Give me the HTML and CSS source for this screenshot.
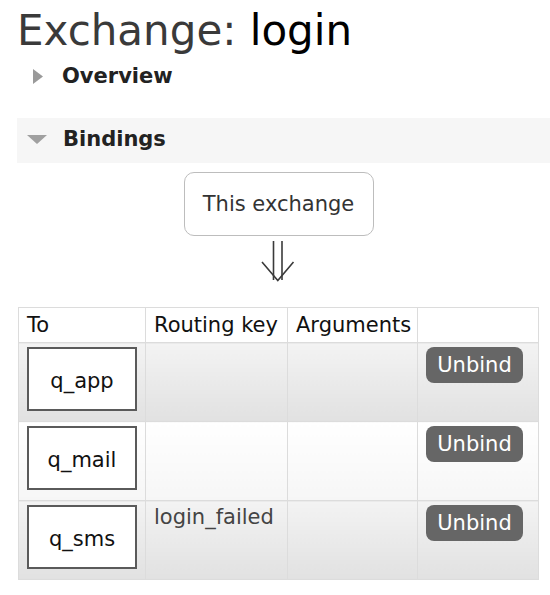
FILE: index.html
```html
<!DOCTYPE html>
<html>
<head>
<meta charset="utf-8">
<link rel="stylesheet" href="styles.css">
</head>
<body>
<h1 class="title"><span class="title-dim">Exchange:</span> login</h1>

<div class="section">
  <div class="sec-head">
    <svg class="tri-right" width="10" height="15" viewBox="0 0 10 15"><polygon points="0,0 10,7.5 0,15" fill="#9a9a9a"/></svg>
    <span class="sec-label">Overview</span>
  </div>
</div>

<div class="section open">
  <div class="sec-head bar">
    <svg class="tri-down" width="20" height="9" viewBox="0 0 20 9"><polygon points="0,0 20,0 10,9" fill="#a0a0a0"/></svg>
    <span class="sec-label">Bindings</span>
  </div>
  <div class="bindings">
    <div class="diagram">
      <div class="this-ex">This exchange</div>
      <svg class="arrow" width="34" height="41" viewBox="0 0 34 41">
        <line x1="12.5" y1="0" x2="12.5" y2="39" stroke="#3a3a3a" stroke-width="1.6"/>
        <line x1="21" y1="0" x2="21" y2="39" stroke="#3a3a3a" stroke-width="1.6"/>
        <polyline points="1,21 16.8,39.5 32.5,21" fill="none" stroke="#3a3a3a" stroke-width="1.6"/>
      </svg>
    </div>
    <table class="bind-table">
      <colgroup>
        <col class="c-to"><col class="c-key"><col class="c-args"><col class="c-act">
      </colgroup>
      <thead>
        <tr><th>To</th><th>Routing key</th><th>Arguments</th><th></th></tr>
      </thead>
      <tbody>
        <tr class="alt1">
          <td><div class="queue">q_app</div></td>
          <td></td>
          <td></td>
          <td><button class="unbind">Unbind</button></td>
        </tr>
        <tr class="alt0">
          <td><div class="queue">q_mail</div></td>
          <td></td>
          <td></td>
          <td><button class="unbind">Unbind</button></td>
        </tr>
        <tr class="alt1">
          <td><div class="queue">q_sms</div></td>
          <td class="key">login_failed</td>
          <td></td>
          <td><button class="unbind">Unbind</button></td>
        </tr>
      </tbody>
    </table>
  </div>
</div>
</body>
</html>
```

FILE: styles.css
```css
html, body {
  margin: 0;
  background: #fff;
}
body {
  padding: 0 0 0 18px;
  font-family: "DejaVu Sans", Verdana, sans-serif;
  font-size: 21px;
  line-height: 25px;
  color: #222;
  overflow: hidden;
}

.title {
  margin: 7px 0 0 -1px;
  font-family: "DejaVu Sans", Verdana, sans-serif;
  font-weight: normal;
  font-size: 42px;
  line-height: 48px;
  color: #000;
  white-space: nowrap;
}
.title-dim {
  color: #3a3a3a;
}

.sec-head {
  display: flex;
  align-items: center;
  height: 25px;
}
.section {
  margin-top: 9px;
}
.section.open {
  margin-top: 29px;
}
.tri-right {
  margin-left: 15px;
  margin-right: 19px;
}
.sec-label {
  font-weight: bold;
  color: #222;
}
.sec-head.bar {
  margin-left: -1px;
  padding: 9px 0 11px 0;
  background: #f6f6f6;
}
.tri-down {
  margin-left: 10px;
  margin-right: 16px;
}

.bindings {
  width: 521px;
}
.diagram {
  display: flex;
  flex-direction: column;
  align-items: center;
  padding-top: 9px;
}
.this-ex {
  box-sizing: border-box;
  width: 190px;
  height: 64px;
  border: 1px solid #bdbdbd;
  border-radius: 10px;
  display: flex;
  align-items: center;
  justify-content: center;
  color: #333;
}
.arrow {
  display: block;
  margin-top: 5px;
  margin-left: -2px;
}

.bind-table {
  margin-top: 25px;
  width: 521px;
  border-collapse: collapse;
  table-layout: fixed;
  border: 1px solid #dcdcdc;
}
.c-to { width: 127px; }
.c-key { width: 142px; }
.c-args { width: 130px; }
.c-act { width: 121px; }

.bind-table th {
  text-align: left;
  font-weight: normal;
  color: #111;
  padding: 5px 8px 4px 8px;
  border: 1px solid #dcdcdc;
  background: #fff;
  white-space: nowrap;
}
.bind-table td {
  vertical-align: top;
  padding: 4px 8px 10px 8px;
  border: 1px solid #dcdcdc;
}
.alt1 td {
  background: linear-gradient(#f3f3f3, #e1e1e1);
}
.alt0 td {
  background: linear-gradient(#ffffff, #f6f6f6);
}
.key {
  color: #444;
}
.queue {
  box-sizing: border-box;
  width: 110px;
  height: 64px;
  padding-top: 4px;
  border: 2px solid #5a5a5a;
  background: #fff;
  display: flex;
  align-items: center;
  justify-content: center;
  color: #111;
}
.unbind {
  display: block;
  box-sizing: border-box;
  width: 97px;
  height: 36px;
  padding: 0;
  border: none;
  border-radius: 8px;
  background: #666;
  color: #fff;
  font-family: "DejaVu Sans", Verdana, sans-serif;
  font-size: 21px;
  line-height: 25px;
}
```
